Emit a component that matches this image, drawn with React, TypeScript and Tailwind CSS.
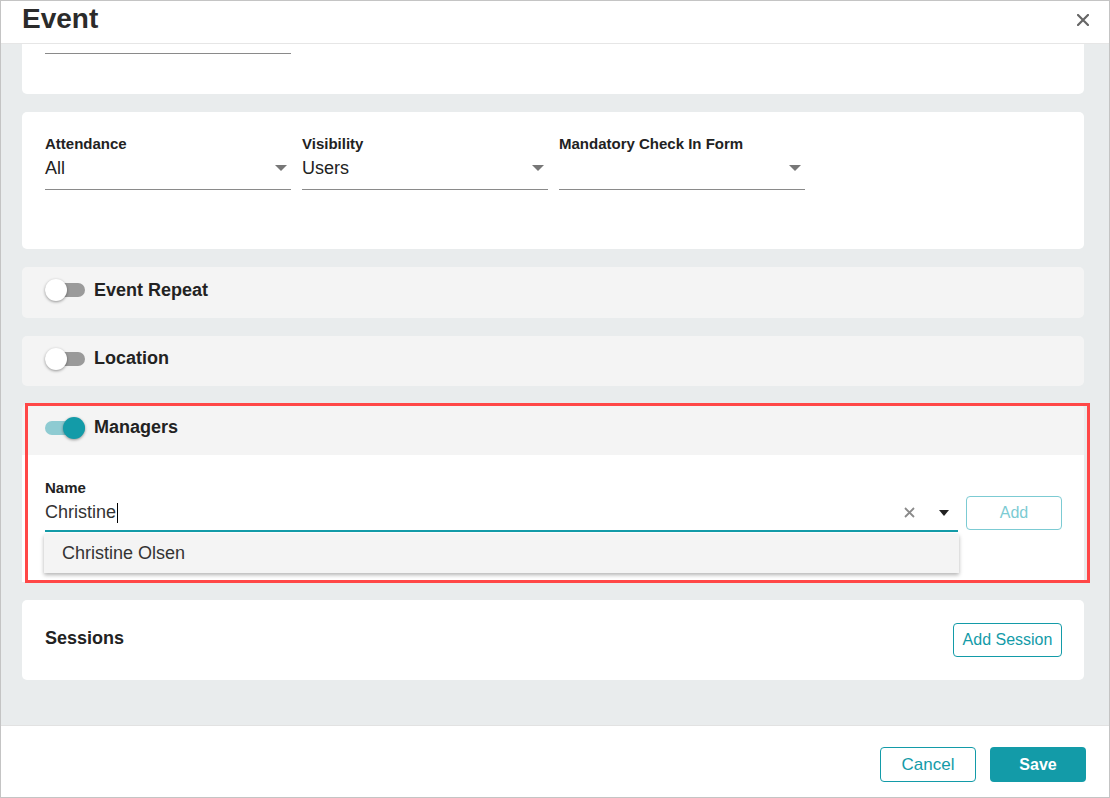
import React from "react";

const TEAL = "#139ba8";

function Caret({ className = "" }: { className?: string }) {
  return (
    <svg width="12" height="6" viewBox="0 0 12 6" className={className}>
      <path d="M0 0 L12 0 L6 6 Z" fill="#777" />
    </svg>
  );
}

function SelectField({ label, value }: { label: string; value: string }) {
  return (
    <div className="w-[246px] flex flex-col">
      <div className="text-[15px] font-bold text-[#222] leading-[18px]">{label}</div>
      <div className="flex items-start justify-between h-[37px] pt-[5px] border-b border-[#8a8a8a]">
        <span className="text-[18px] leading-[20px] text-[#222]">{value}</span>
        <Caret className="mr-[4px] mt-[7px]" />
      </div>
    </div>
  );
}

function Toggle({ on }: { on: boolean }) {
  return (
    <div className="relative w-[40px] h-[22px] flex items-center">
      <div className={`w-[40px] h-[14px] rounded-full ${on ? "bg-[#8ecbd2]" : "bg-[#9a9a9a]"}`} />
      <div
        className={`absolute top-0 w-[22px] h-[22px] rounded-full shadow-[0_1px_3px_rgba(0,0,0,0.4)] ${
          on ? "left-[18px] bg-[#139ba8]" : "left-0 bg-white"
        }`}
      />
    </div>
  );
}

function ToggleCard({ title, on, h }: { title: string; on: boolean; h: string }) {
  return (
    <div className={`bg-[#f4f4f4] rounded-[5px] ${h} flex items-center px-[23px] pb-[5px] gap-[9px]`}>
      <Toggle on={on} />
      <span className="text-[18px] font-bold text-[#222]">{title}</span>
    </div>
  );
}

export default function App() {
  return (
    <div
      className="w-[1110px] h-[798px] border border-[#c4c4c4] flex flex-col overflow-hidden bg-white"
      style={{ fontFamily: '"Liberation Sans", Arial, sans-serif' }}
    >
      {/* Header */}
      <div className="h-[43px] shrink-0 flex items-center justify-between pl-[21px] pr-[20px] border-b border-[#e6e6e6] bg-white">
        <h1 className="text-[28px] font-bold text-[#2b2b2b] leading-none -mt-[6px]">Event</h1>
        <svg width="12" height="12" viewBox="0 0 12 12" className="-mt-[4px]">
          <path d="M1 1 L11 11 M11 1 L1 11" stroke="#666" strokeWidth="2.2" strokeLinecap="square" />
        </svg>
      </div>

      {/* Body */}
      <div className="relative flex-1 bg-[#e9eced] pl-[21px] pr-[25px] flex flex-col gap-[18px]">
        {/* scrolled card */}
        <div className="bg-white rounded-b-[5px] h-[50px] pt-[9px] px-[23px]">
          <div className="w-[246px] border-b border-[#8a8a8a]" />
        </div>

        {/* Attendance card */}
        <div className="bg-white rounded-[5px] h-[137px] pt-[23px] px-[23px] flex gap-[11px]">
          <SelectField label="Attendance" value="All" />
          <SelectField label="Visibility" value="Users" />
          <SelectField label="Mandatory Check In Form" value="" />
        </div>

        <ToggleCard title="Event Repeat" on={false} h="h-[51px]" />
        <ToggleCard title="Location" on={false} h="h-[50px]" />

        {/* Managers card */}
        <div className="relative rounded-[5px] overflow-visible">
          <div className="bg-[#f4f4f4] rounded-t-[5px] h-[51px] flex items-center px-[23px] pb-[4px] gap-[9px]">
            <Toggle on={true} />
            <span className="text-[18px] font-bold text-[#222]">Managers</span>
          </div>
          <div className="bg-white h-[127px] pt-[24px] pl-[23px] pr-[22px] flex gap-[8px]">
            <div className="relative w-[913px]">
              <div className="text-[15px] font-bold text-[#222] leading-[18px]">Name</div>
              <div className="flex items-center h-[35px] pb-[2px] border-b-2 border-[#139ba8]">
                <span className="text-[18px] text-[#333]">Christine</span>
                <span className="inline-block w-[1px] h-[20px] bg-black ml-[1px]" />
                <div className="flex-1" />
                <svg width="11" height="11" viewBox="0 0 11 11" className="mr-[24px]">
                  <path d="M1 1 L10 10 M10 1 L1 10" stroke="#8a8a8a" strokeWidth="1.8" />
                </svg>
                <svg width="10" height="6" viewBox="0 0 10 6" className="mr-[9px]">
                  <path d="M0 0 L10 0 L5 6 Z" fill="#222" />
                </svg>
              </div>
              <div className="absolute left-[-1px] top-[55px] w-[915px] h-[39px] bg-[#f4f4f4] shadow-[0_2px_4px_rgba(0,0,0,0.3)] flex items-center pl-[18px] z-10">
                <span className="text-[18px] text-[#333]">Christine Olsen</span>
              </div>
            </div>
            <div className="pt-[17px]">
              <button className="w-[96px] h-[34px] rounded-[4px] border border-[#7ccbd3] text-[16px] text-[#7ccbd3] bg-white">
                Add
              </button>
            </div>
          </div>
          {/* highlight annotation */}
          <div className="absolute left-[3px] top-[-1px] w-[1065px] h-[180px] border-[3px] border-[#ff4747] pointer-events-none z-20" />
        </div>

        {/* Sessions */}
        <div className="bg-white rounded-[5px] h-[80px] pl-[23px] pr-[22px] flex items-center justify-between">
          <span className="text-[18px] font-bold text-[#222] mb-[4px]">Sessions</span>
          <button className="w-[109px] h-[34px] rounded-[4px] border border-[#139ba8] text-[16px] text-[#139ba8] bg-white">
            Add Session
          </button>
        </div>
      </div>

      {/* Footer */}
      <div className="h-[72px] shrink-0 border-t border-[#e2e2e2] bg-white flex items-center justify-end gap-[14px] pr-[23px] pt-[6px]">
        <button className="w-[96px] h-[35px] rounded-[4px] border border-[#139ba8] text-[17px] text-[#139ba8] bg-white">
          Cancel
        </button>
        <button
          className="w-[96px] h-[35px] rounded-[4px] text-[16px] font-bold text-white"
          style={{ backgroundColor: TEAL }}
        >
          Save
        </button>
      </div>
    </div>
  );
}
